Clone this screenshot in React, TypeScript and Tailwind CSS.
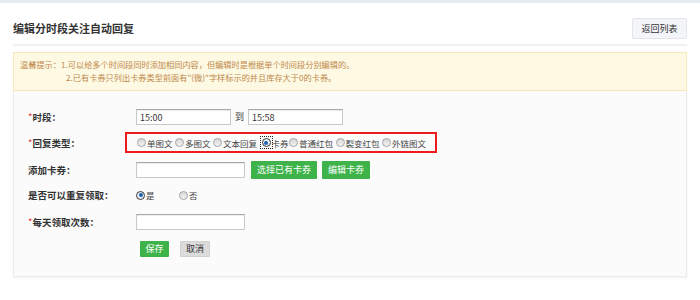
import React from 'react';

const Radio: React.FC<{ checked?: boolean; focused?: boolean; label: string }> = ({ checked, focused, label }) => (
  <label
    className={
      focused
        ? 'ml-[2px] mr-[-2px] flex shrink-0 items-center gap-[1px] whitespace-nowrap text-[8.5px] leading-[12px] text-[#444]'
        : 'flex shrink-0 items-center gap-[1px] whitespace-nowrap text-[8.5px] leading-[12px] text-[#444]'
    }
  >
    <span
      className={
        focused
          ? 'flex shrink-0 items-center justify-center w-[9px] h-[9px] outline outline-1 outline-offset-1 outline-dotted outline-[#222]'
          : 'flex shrink-0 items-center justify-center w-[9px] h-[9px]'
      }
    >
      <span
        className={
          checked
            ? 'flex items-center justify-center w-[9px] h-[9px] rounded-full border border-[#3a3a3a] bg-[#e8eef5]'
            : 'w-[9px] h-[9px] rounded-full border border-[#a3a3a3] bg-gradient-to-b from-[#d6d6d6] to-[#f4f4f4]'
        }
      >
        {checked && <span className="w-[4px] h-[4px] rounded-full bg-[#1d5fb0]" />}
      </span>
    </span>
    <span>{label}</span>
  </label>
);

const Label: React.FC<{ required?: boolean; text: string }> = ({ required, text }) => (
  <div className="w-[108px] shrink-0 whitespace-nowrap text-[9.5px] font-bold leading-[12px] text-[#333]">
    {required && <span className="text-[#e53333] font-normal">*</span>}
    {text}
  </div>
);

const inputCls =
  'h-[16px] shrink-0 border border-[#c9c9c9] border-t-[#a9a9a9] bg-white px-[3px] text-[9px] leading-[14px] text-[#333] shadow-[inset_0_1px_1px_rgba(0,0,0,0.08)]';

const greenBtn = 'h-[18px] shrink-0 px-[6px] bg-[#3db34a] text-white text-[9px] leading-[18px] rounded-[1px] whitespace-nowrap';

export default function App() {
  const replyTypes = ['单图文', '多图文', '文本回复', '卡券', '普通红包', '裂变红包', '外链图文'];

  return (
    <div className="min-h-[300px] bg-white text-[#333] [font-family:'Noto_Sans_CJK_SC','Microsoft_YaHei',sans-serif]">
      <div className="h-[3px] bg-[#e7ebef]" />
      <div className="mx-[13px]">
        <header className="flex items-center justify-between pt-[15px] pb-[5px] border-b-2 border-[#f1f1f1]">
          <h2 className="text-[11px] font-bold leading-[21px] text-[#333]">编辑分时段关注自动回复</h2>
          <button className="w-[55px] h-[21px] rounded-[2px] border border-[#e3e5ea] bg-[#f4f5f9] text-[9px] text-[#333]">
            返回列表
          </button>
        </header>

        <div className="mt-[6px] border border-[#f7e9b8] bg-[#fdf9e3] px-[6px] pt-[5px] pb-[6px] text-[8.2px] leading-[13px] text-[#c0884a]">
          <div>温馨提示：1.可以给多个时间段同时添加相同内容，但编辑时是根据单个时间段分别编辑的。</div>
          <div className="pl-[46px]">2.已有卡券只列出卡券类型前面有"(微)"字样标示的并且库存大于0的卡券。</div>
        </div>

        <div className="border border-[#ececec] border-t-0 bg-[#fbfbfb] pl-[14px] pt-[13px] pb-[15px] shadow-[0_1px_2px_rgba(0,0,0,0.06)]">
          <div className="flex items-center h-[26px]">
            <Label required text="时段：" />
            <input className={`${inputCls} w-[95px]`} defaultValue="15:00" />
            <span className="mx-[4px] text-[9px] text-[#333]">到</span>
            <input className={`${inputCls} w-[95px]`} defaultValue="15:58" />
          </div>

          <div className="flex items-center h-[25px]">
            <Label required text="回复类型：" />
            <div className="ml-[-11px] flex shrink-0 items-center gap-[2.5px] w-[312px] h-[21px] border-2 border-[#ee1c1c] pl-[10px]">
              {replyTypes.map((t) => (
                <Radio key={t} label={t} checked={t === '卡券'} focused={t === '卡券'} />
              ))}
            </div>
          </div>

          <div className="flex items-center h-[29px]">
            <Label text="添加卡券：" />
            <input className={`${inputCls} w-[109px]`} />
            <button className={`${greenBtn} ml-[6px]`}>选择已有卡券</button>
            <button className={`${greenBtn} ml-[5px]`}>编辑卡券</button>
          </div>

          <div className="flex items-center h-[22px]">
            <Label text="是否可以重复领取：" />
            <div className="flex items-center">
              <div className="w-[43px]">
                <Radio label="是" checked />
              </div>
              <Radio label="否" />
            </div>
          </div>

          <div className="flex items-center h-[31px]">
            <Label required text="每天领取次数：" />
            <input className={`${inputCls} w-[109px]`} />
          </div>

          <div className="flex items-center h-[24px] pl-[112px] gap-[11px]">
            <button className="w-[29px] h-[16px] bg-[#3db34a] text-white text-[9px] leading-[16px] rounded-[1px]">保存</button>
            <button className="w-[30px] h-[16px] bg-[#dcdcdc] border border-[#d0d0d0] text-[#333] text-[9px] leading-[14px] rounded-[1px]">取消</button>
          </div>
        </div>
      </div>
    </div>
  );
}
